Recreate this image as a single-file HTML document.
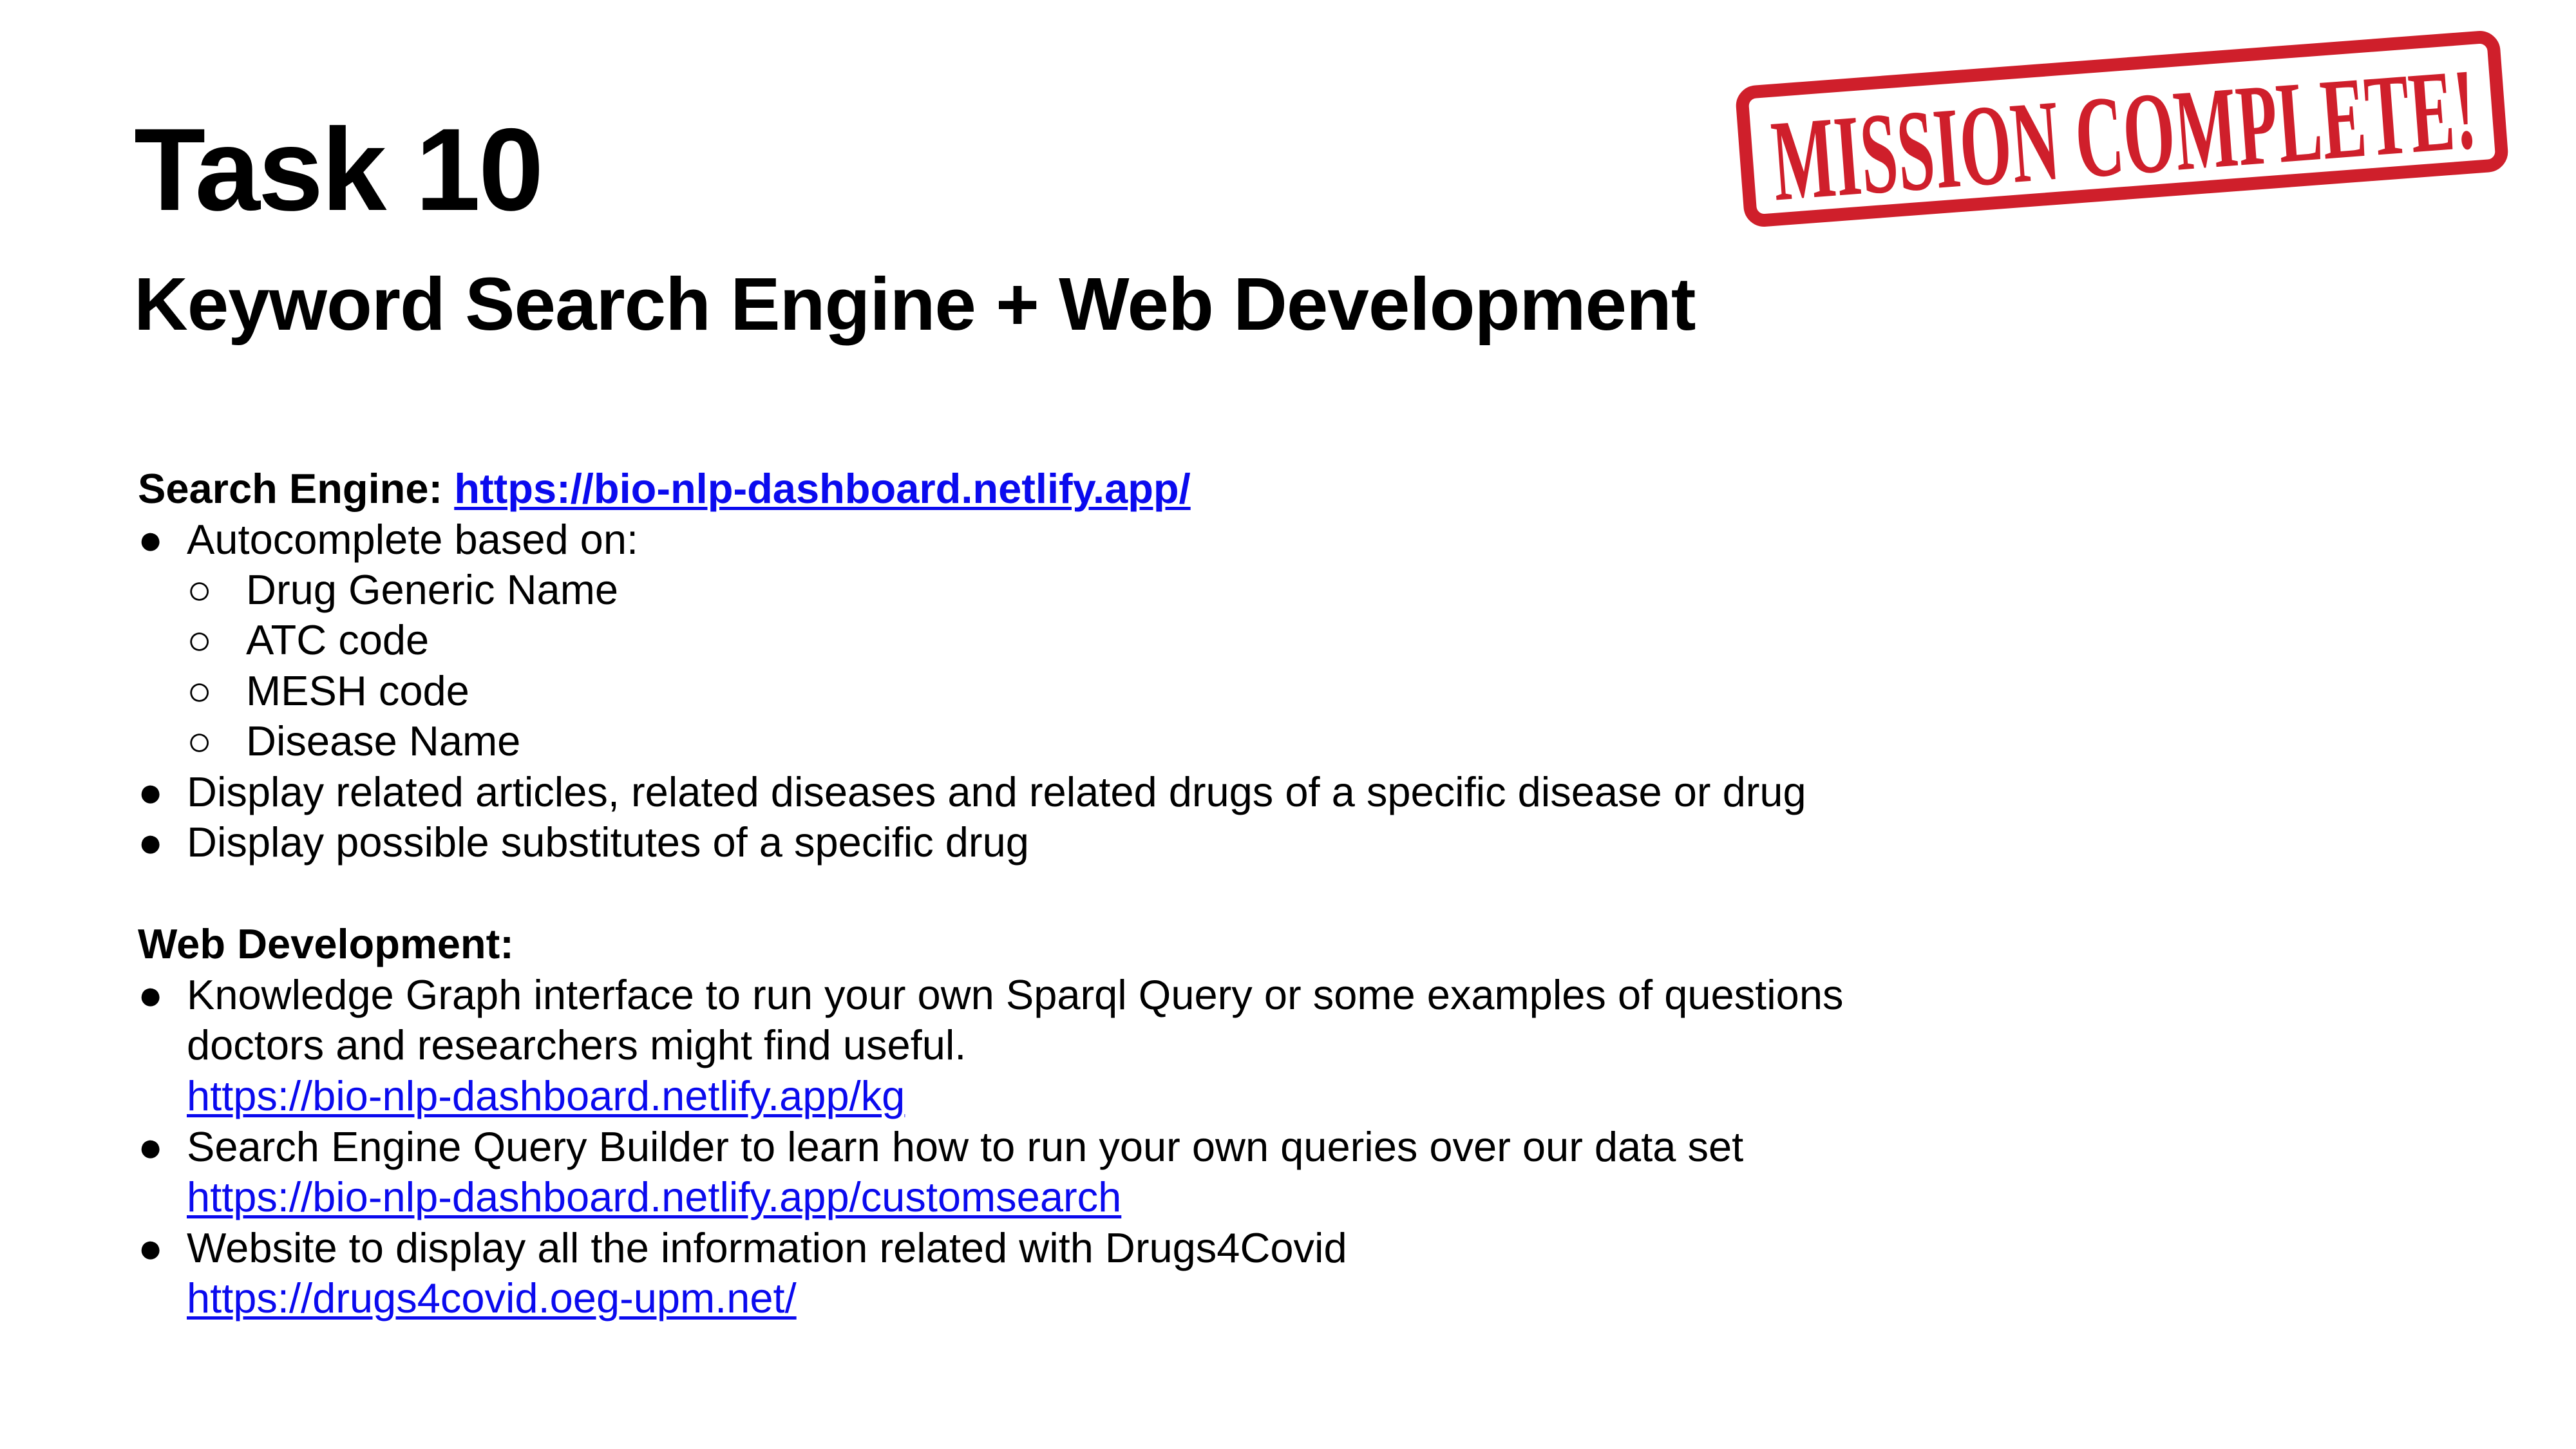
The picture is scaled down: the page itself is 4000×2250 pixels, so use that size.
<!DOCTYPE html>
<html><head><meta charset="utf-8"><style>
html,body{margin:0;padding:0;background:#fff;}
body{width:4000px;height:2250px;position:relative;overflow:hidden;font-family:"Liberation Sans",Arial,sans-serif;color:#000;}
.l{position:absolute;white-space:nowrap;font-size:65px;line-height:65px;}
.b{font-weight:bold;}
a{color:#0a0aee;text-decoration:underline;text-decoration-thickness:5px;text-underline-offset:6px;}
</style></head><body>
<div class="l b" style="left:208px;top:172px;font-size:182px;line-height:182px;letter-spacing:-3px;">Task 10</div>
<div class="l b" style="left:208px;top:414px;font-size:116px;line-height:116px;letter-spacing:-1px;">Keyword Search Engine + Web Development</div>

<div class="l b" style="left:214px;top:726px;">Search Engine: <a>https://bio-nlp-dashboard.netlify.app/</a></div>
<div class="l" style="left:214px;top:805px;">●</div><div class="l" style="left:290px;top:805px;">Autocomplete based on:</div>
<div class="l" style="left:290px;top:883px;">○</div><div class="l" style="left:382px;top:883px;">Drug Generic Name</div>
<div class="l" style="left:290px;top:961px;">○</div><div class="l" style="left:382px;top:961px;">ATC code</div>
<div class="l" style="left:290px;top:1040px;">○</div><div class="l" style="left:382px;top:1040px;">MESH code</div>
<div class="l" style="left:290px;top:1118px;">○</div><div class="l" style="left:382px;top:1118px;">Disease Name</div>
<div class="l" style="left:214px;top:1197px;">●</div><div class="l" style="left:290px;top:1197px;">Display related articles, related diseases and related drugs of a specific disease or drug</div>
<div class="l" style="left:214px;top:1275px;">●</div><div class="l" style="left:290px;top:1275px;">Display possible substitutes of a specific drug</div>

<div class="l b" style="left:214px;top:1433px;">Web Development:</div>
<div class="l" style="left:214px;top:1512px;">●</div><div class="l" style="left:290px;top:1512px;">Knowledge Graph interface to run your own Sparql Query or some examples of questions</div>
<div class="l" style="left:290px;top:1590px;">doctors and researchers might find useful.</div>
<div class="l" style="left:290px;top:1669px;"><a>https://bio-nlp-dashboard.netlify.app/kg</a></div>
<div class="l" style="left:214px;top:1748px;">●</div><div class="l" style="left:290px;top:1748px;">Search Engine Query Builder to learn how to run your own queries over our data set</div>
<div class="l" style="left:290px;top:1826px;"><a>https://bio-nlp-dashboard.netlify.app/customsearch</a></div>
<div class="l" style="left:214px;top:1905px;">●</div><div class="l" style="left:290px;top:1905px;">Website to display all the information related with Drugs4Covid</div>
<div class="l" style="left:290px;top:1983px;"><a>https://drugs4covid.oeg-upm.net/</a></div>

<svg style="position:absolute;left:0;top:0" width="4000" height="2250">
<g transform="rotate(-4.3 3295 200)">
<rect x="2710" y="100" width="1170" height="200" rx="22" ry="22" fill="none" stroke="#cf1f2b" stroke-width="20"/>
<text x="2750" y="270" font-family="Liberation Serif, serif" font-weight="bold" font-size="180" fill="#cf1f2b" textLength="1095" lengthAdjust="spacingAndGlyphs">MISSION COMPLETE!</text>
</g>
</svg>
</body></html>
